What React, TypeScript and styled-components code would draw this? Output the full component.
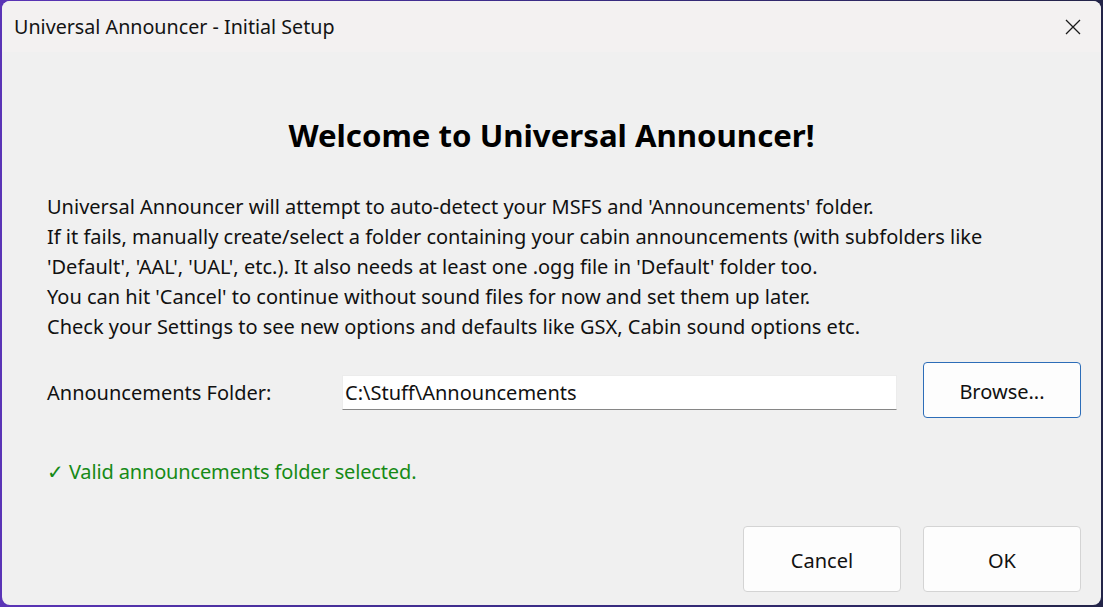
import * as React from "react"
import styled, { createGlobalStyle } from "styled-components"

const GlobalStyle = createGlobalStyle`
    html, body {
        margin: 0;
        padding: 0;
        height: 100%;
    }
    body {
        background: linear-gradient(90deg, #5a34b6 0%, #3a2c86 50%, #232448 100%);
        font-family: "Noto Sans", "Open Sans", sans-serif;
        color: #111;
        overflow: hidden;
    }
    #root {
        height: 100%;
    }
`

const Window = styled.div`
    box-sizing: border-box;
    height: calc(100vh - 3px);
    margin: 1px 2px 2px 2px;
    border-radius: 8px;
    background: #f0f0f0;
    overflow: hidden;
    display: flex;
    flex-direction: column;
`

const TitleBar = styled.div`
    height: 51px;
    flex: none;
    background: #f3f1f1;
    display: flex;
    align-items: center;
    justify-content: space-between;
    padding: 0 16px 0 12px;
    font-size: 19.7px;
    color: #141414;
`

const CloseButton = styled.div`
    width: 24px;
    height: 24px;
    display: flex;
    align-items: center;
    justify-content: center;
`

const Body = styled.div`
    flex: 1;
    display: flex;
    flex-direction: column;
    padding: 63px 20px 13px 45px;
`

// centred on the whole window, not on the padded body
const Heading = styled.h1`
    margin: 0 -22px 0 -47px;
    font-size: 31.2px;
    line-height: 40px;
    font-weight: 700;
    text-align: center;
    color: #000;
`

const Intro = styled.div`
    margin-top: 37px;
    font-size: 20px;
    line-height: 30px;
`

const Line = styled.div`
    white-space: nowrap;
`

const FolderRow = styled.div`
    margin-top: 20px;
    display: flex;
    align-items: center;
    height: 56px;
`

const Label = styled.div`
    width: 295px;
    font-size: 20px;
    padding-top: 4px;
`

const PathInput = styled.div`
    box-sizing: border-box;
    width: 555px;
    height: 35px;
    margin-top: 4px;
    background: #fff;
    border: 1px solid #ececec;
    border-bottom: 1px solid #868686;
    font-size: 20px;
    line-height: 34px;
    padding-left: 2px;
`

const Button = styled.div<{ $default?: boolean; $tall?: boolean }>`
    box-sizing: border-box;
    width: 158px;
    height: ${p => (p.$tall ? 66 : 56)}px;
    border-radius: 4px;
    background: #fdfdfd;
    border: 1px solid ${p => (p.$default ? "#2d6db8" : "#d4d4d4")};
    display: flex;
    align-items: center;
    justify-content: center;
    font-size: 20px;
    padding-top: 2px;
    color: #111;
`

const BrowseButton = styled(Button)`
    margin-left: 26px;
`

const Status = styled.div`
    margin-top: 39px;
    font-size: 20px;
    line-height: 30px;
    color: #168a16;
    letter-spacing: -0.15px;
`

const Footer = styled.div`
    margin-top: auto;
    display: flex;
    justify-content: flex-end;
    gap: 22px;
`

export default function App() {
    return (
        <>
            <GlobalStyle />
            <Window>
                <TitleBar>
                    <span>Universal Announcer - Initial Setup</span>
                    <CloseButton>
                        <svg width="16" height="16" viewBox="0 0 16 16">
                            <path d="M1 1 L15 15 M15 1 L1 15" stroke="#1a1a1a" strokeWidth="1.3" />
                        </svg>
                    </CloseButton>
                </TitleBar>
                <Body>
                    <Heading>Welcome to Universal Announcer!</Heading>
                    <Intro>
                        <Line>Universal Announcer will attempt to auto-detect your MSFS and 'Announcements' folder.</Line>
                        <Line>If it fails, manually create/select a folder containing your cabin announcements (with subfolders like</Line>
                        <Line>'Default', 'AAL', 'UAL', etc.). It also needs at least one .ogg file in 'Default' folder too.</Line>
                        <Line>You can hit 'Cancel' to continue without sound files for now and set them up later.</Line>
                        <Line>Check your Settings to see new options and defaults like GSX, Cabin sound options etc.</Line>
                    </Intro>
                    <FolderRow>
                        <Label>Announcements Folder:</Label>
                        <PathInput>C:\Stuff\Announcements</PathInput>
                        <BrowseButton $default>Browse...</BrowseButton>
                    </FolderRow>
                    <Status>✓ Valid announcements folder selected.</Status>
                    <Footer>
                        <Button $tall>Cancel</Button>
                        <Button $tall>OK</Button>
                    </Footer>
                </Body>
            </Window>
        </>
    )
}
